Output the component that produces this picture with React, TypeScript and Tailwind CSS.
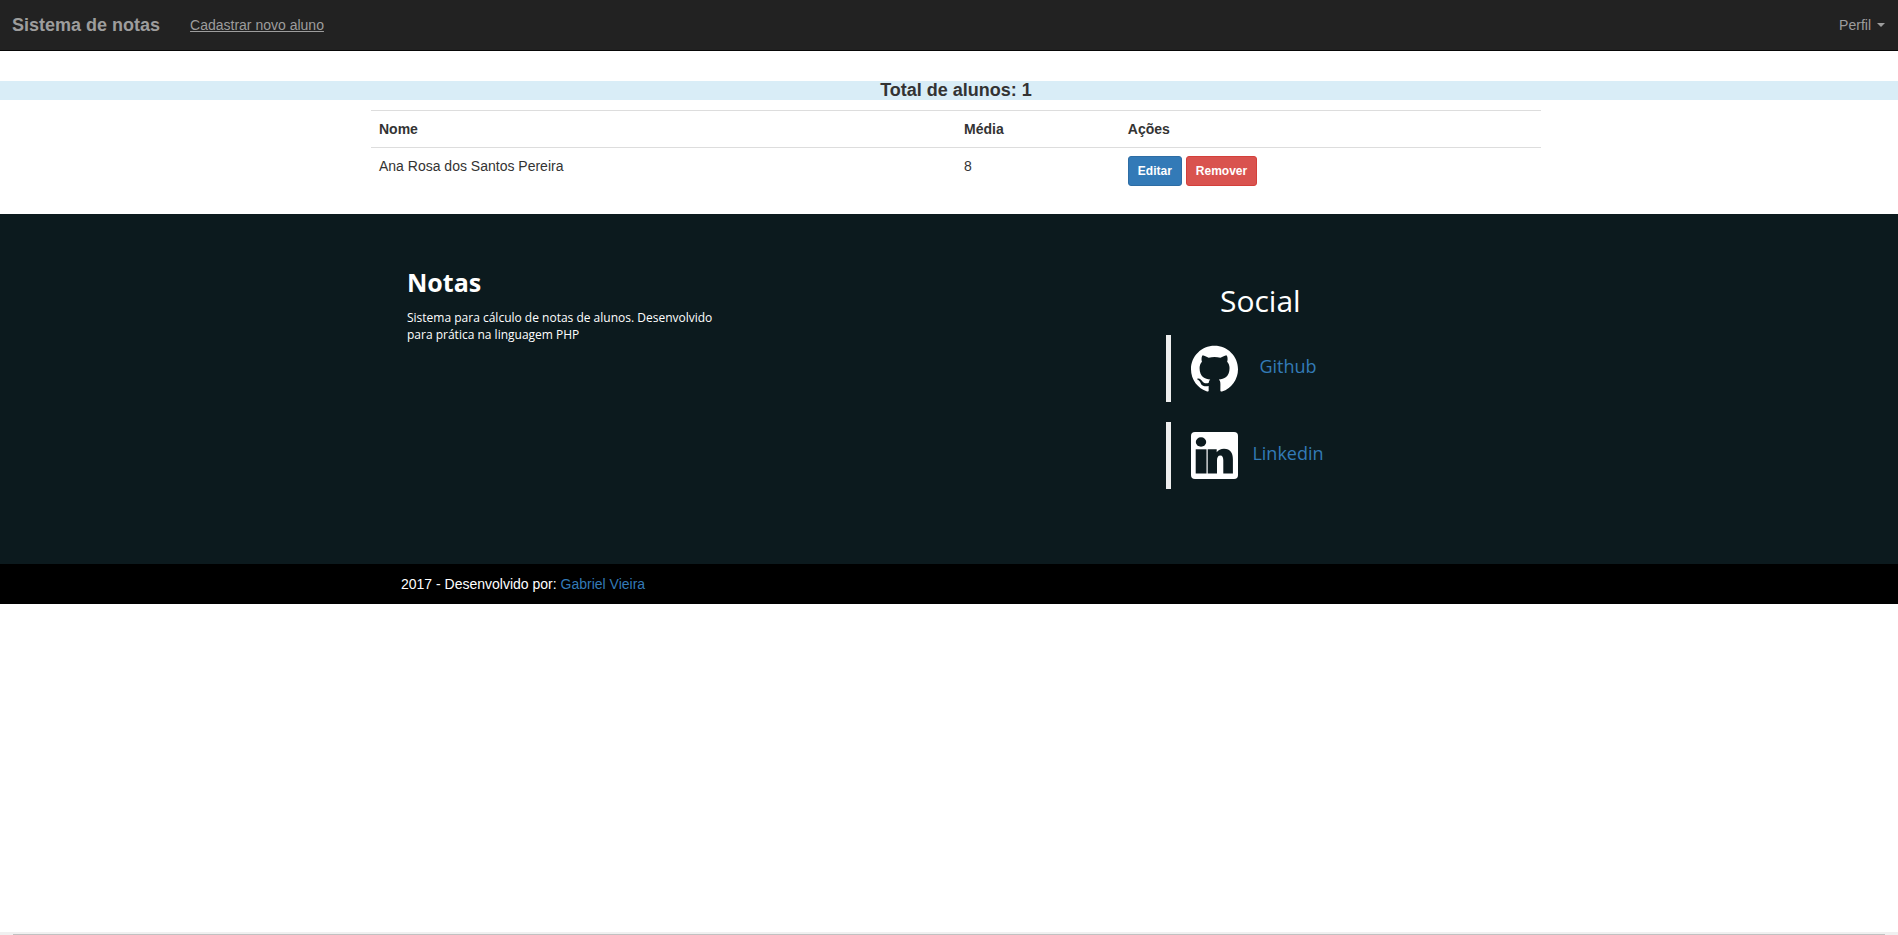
import type { ReactNode } from 'react';

const alunos = [{ id: 1, nome: 'Ana Rosa dos Santos Pereira', media: 8 }];

function Navbar() {
  return (
    <nav className="flex h-[51px] items-center justify-between border-b border-[#080808] bg-[#222222] pr-[13px] pl-3 text-sm text-[#9d9d9d]">
      <div className="flex items-center gap-[30px]">
        <a href="#" className="text-lg leading-5 font-bold">Sistema de notas</a>
        <a href="#" className="leading-5 underline">Cadastrar novo aluno</a>
      </div>
      <button type="button" className="flex items-center gap-1.5 leading-5">
        Perfil
        <span className="border-x-4 border-t-4 border-x-transparent border-t-[#9d9d9d]" />
      </button>
    </nav>
  );
}

function TabelaAlunos() {
  return (
    <table className="mx-auto w-full max-w-[1170px] table-fixed text-left text-sm leading-5">
      <thead>
        <tr className="border-t border-[#dddddd]">
          <th className="w-1/2 p-2">Nome</th>
          <th className="w-[14%] p-2">Média</th>
          <th className="p-2">Ações</th>
        </tr>
      </thead>
      <tbody>
        {alunos.map((aluno) => (
          <tr key={aluno.id} className="border-t border-[#dddddd] align-top">
            <td className="p-2">{aluno.nome}</td>
            <td className="p-2">{aluno.media}</td>
            <td className="p-2">
              <div className="flex gap-1 text-xs leading-[18px] font-bold text-white">
                <button type="button" className="rounded-[3px] border border-[#2e6da4] bg-[#337ab7] px-[9px] py-[5px]">Editar</button>
                <button type="button" className="rounded-[3px] border border-[#d43f3a] bg-[#d9534f] px-[9px] py-[5px]">Remover</button>
              </div>
            </td>
          </tr>
        ))}
      </tbody>
    </table>
  );
}

function GithubIcon() {
  return (
    <svg viewBox="0 -0.25 16 16" className="size-[47px] fill-white" aria-hidden="true">
      <path d="M8 0C3.58 0 0 3.58 0 8c0 3.54 2.29 6.53 5.47 7.59.4.07.55-.17.55-.38 0-.19-.01-.82-.01-1.49-2.01.37-2.53-.49-2.69-.94-.09-.23-.48-.94-.82-1.13-.28-.15-.68-.52-.01-.53.63-.01 1.08.58 1.23.82.72 1.21 1.87.87 2.33.66.07-.52.28-.87.51-1.07-1.78-.2-3.64-.89-3.64-3.95 0-.87.31-1.59.82-2.15-.08-.2-.36-1.02.08-2.12 0 0 .67-.21 2.2.82.64-.18 1.32-.27 2-.27s1.36.09 2 .27c1.53-1.04 2.2-.82 2.2-.82.44 1.1.16 1.92.08 2.12.51.56.82 1.27.82 2.15 0 3.07-1.87 3.75-3.65 3.95.29.25.54.73.54 1.48 0 1.07-.01 1.93-.01 2.2 0 .21.15.46.55.38A8.01 8.01 0 0 0 16 8c0-4.42-3.58-8-8-8z" />
    </svg>
  );
}

function LinkedinIcon() {
  return (
    <svg viewBox="0 0 47 47" className="size-[47px]" aria-hidden="true">
      <rect width="47" height="47" rx="4" fill="#ffffff" />
      <g fill="#0c1a1e">
        <ellipse cx="10" cy="10" rx="5.200" ry="4.700" />
        <rect x="4.700" y="17.300" width="10.800" height="24.200" />
        <path d="M16.700 17.300h9v3c1.600-2.400 4-3.600 7.300-3.600 6.500 0 8.900 4.500 8.900 10.500v14.300h-9.600V28.500c0-3-.6-5-3-5s-3.300 2-3.300 5v13h-9.300z" />
      </g>
    </svg>
  );
}

function SocialLink({ icon, label }: { icon: ReactNode; label: string }) {
  return (
    <li className="flex h-[67px] items-center border-l-[5px] border-[#eeeeee] pl-5">
      {icon}
      <a href="#" className="w-[100px] pb-1.5 text-center text-lg leading-6 text-[#337ab7]">{label}</a>
    </li>
  );
}

function Footer() {
  return (
    <footer>
      <div className="bg-[#0c1a1e] pl-[14px] font-['Open_Sans',sans-serif] text-white">
        <div className="mx-auto flex h-[350px] max-w-[1170px]">
          <section className="w-[795px] pt-[52px] pl-9">
            <h2 className="text-[25px] leading-8 font-bold">Notas</h2>
            <p className="mt-[11px] max-w-[320px] text-xs leading-[17px]">
              Sistema para cálculo de notas de alunos. Desenvolvido para prática na linguagem PHP
            </p>
          </section>
          <section className="pt-[71px]">
            <h2 className="pl-[54px] text-3xl leading-8">Social</h2>
            <ul className="mt-[18px] space-y-5">
              <SocialLink icon={<GithubIcon />} label="Github" />
              <SocialLink icon={<LinkedinIcon />} label="Linkedin" />
            </ul>
          </section>
        </div>
      </div>
      <div className="bg-black pl-[14px] text-sm leading-5 text-white">
        <p className="mx-auto max-w-[1170px] px-[30px] py-2.5">
          2017 - Desenvolvido por: <a href="#" className="text-[#337ab7]">Gabriel Vieira</a>
        </p>
      </div>
    </footer>
  );
}

export default function App() {
  return (
    <div className="flex min-h-screen flex-col bg-white font-['Liberation_Sans',Arial,sans-serif] text-[#333333]">
      <Navbar />
      <main className="pt-[30px] pb-5">
        <h1 className="mb-2.5 bg-[#d9edf7] pl-[14px] text-center text-lg leading-[19px] font-bold">
          Total de alunos: {alunos.length}
        </h1>
        <div className="pl-[14px]">
          <TabelaAlunos />
        </div>
      </main>
      <Footer />
      <div className="mt-auto h-[3px] bg-[#f0f0f0] px-[13px] pt-0.5">
        <div className="h-px bg-[#c1c1c1]" />
      </div>
    </div>
  );
}
